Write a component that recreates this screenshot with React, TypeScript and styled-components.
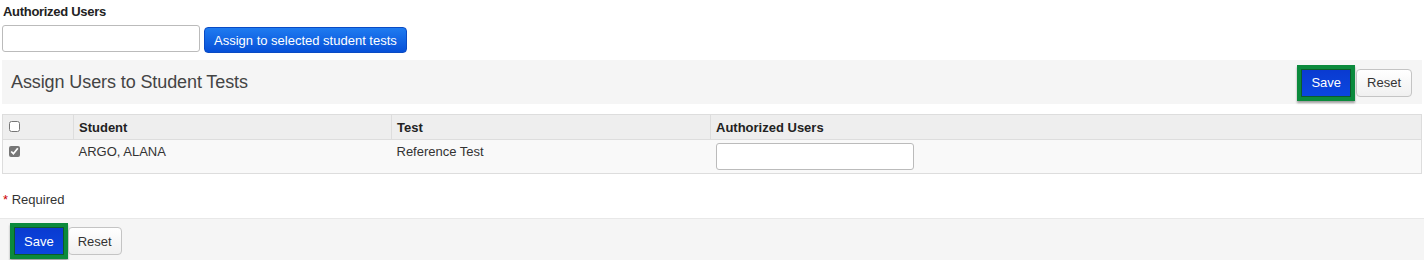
import styled, { createGlobalStyle } from "styled-components";

const Global = createGlobalStyle`
  body {
    margin: 0;
    background: #fff;
    font-family: "Liberation Sans", Arial, sans-serif;
    font-size: 13px;
    color: #333;
  }
`;

const Page = styled.div`
  padding: 0 2px;
`;

const Label = styled.div`
  font-weight: bold;
  font-size: 13px;
  letter-spacing: -0.3px;
  padding: 4px 0 0 1px;
  height: 17px;
  color: #222;
`;

const AssignRow = styled.div`
  display: flex;
  align-items: flex-start;
  gap: 4px;
  margin-top: 4px;
`;

const TextInput = styled.input<{ $w: number }>`
  box-sizing: border-box;
  width: ${(p) => p.$w}px;
  height: 27px;
  border: 1px solid #bbb;
  border-radius: 3px;
  background: #fff;
  margin: 0;
`;

const BlueButton = styled.button`
  height: 26px;
  padding: 0 9px;
  border: 1px solid #0a4bc4;
  border-radius: 4px;
  background: linear-gradient(#1f7bf0, #0650d8);
  color: #fff;
  font-family: inherit;
  font-size: 13px;
  margin-top: 2px;
`;

const PanelHead = styled.div`
  margin-top: 7px;
  height: 44px;
  background: #f5f5f5;
  display: flex;
  align-items: center;
  justify-content: space-between;
  padding: 0 10px 0 9px;
`;

const Title = styled.div`
  font-size: 18px;
  font-weight: 300;
  color: #444;
  letter-spacing: -0.1px;
`;

const Buttons = styled.div`
  display: flex;
  align-items: center;
  gap: 1px;
  padding-top: 1px;
`;

const SaveButton = styled.button`
  box-sizing: border-box;
  height: 36px;
  padding: 0 10px;
  background: linear-gradient(#0a3ad0, #0a47e0);
  color: #fff;
  font-family: inherit;
  font-size: 13px;
  border: 4px solid #0b8a3c;
  outline: 1px solid #0c5c2a;
  outline-offset: -5px;
  border-radius: 0;
  box-shadow: 0 2px 2px rgba(0, 0, 0, 0.35);
`;

const ResetButton = styled.button`
  height: 28px;
  padding: 0 10px;
  background: linear-gradient(#fff, #f0f0f0);
  border: 1px solid #c4c4c4;
  border-radius: 4px;
  color: #333;
  font-family: inherit;
  font-size: 13px;
`;

const Table = styled.table`
  margin-top: 10px;
  width: 100%;
  border-collapse: collapse;
  border: 1px solid #ddd;
  font-size: 13px;
`;

const Th = styled.th<{ $w?: number }>`
  text-align: left;
  font-weight: bold;
  background: #eeeeee;
  border: 1px solid #ddd;
  height: 24px;
  padding: 0 5px;
  width: ${(p) => (p.$w ? `${p.$w}px` : "auto")};
  color: #222;
`;

const Td = styled.td`
  background: #f9f9f9;
  border-top: 1px solid #ddd;
  height: 29px;
  padding: 4px 5px 0;
  vertical-align: top;
`;

const Check = styled.input`
  width: 11px;
  height: 11px;
  margin: 2px 0 0 1px;
  accent-color: #777;
`;

const Required = styled.div`
  margin-top: 18px;
  height: 26px;
  font-size: 13px;
  padding-left: 1px;
  > span {
    color: #c00;
  }
`;

const Footer = styled.div`
  background: #f5f5f5;
  height: 42px;
  display: flex;
  align-items: flex-start;
  padding: 4px 10px 0;
  margin: 0 -2px;
  border-top: 1px solid #e8e8e8;
  > button:last-child {
    margin-top: 4px;
    padding: 0 9px;
  }
`;

export default function App() {
  return (
    <Page>
      <Global />
      <Label>Authorized Users</Label>
      <AssignRow>
        <TextInput $w={198} />
        <BlueButton>Assign to selected student tests</BlueButton>
      </AssignRow>
      <PanelHead>
        <Title>Assign Users to Student Tests</Title>
        <Buttons>
          <SaveButton>Save</SaveButton>
          <ResetButton>Reset</ResetButton>
        </Buttons>
      </PanelHead>
      <Table>
        <thead>
          <tr>
            <Th $w={60}>
              <Check type="checkbox" />
            </Th>
            <Th $w={307}>Student</Th>
            <Th $w={308}>Test</Th>
            <Th>Authorized Users</Th>
          </tr>
        </thead>
        <tbody>
          <tr>
            <Td>
              <Check type="checkbox" defaultChecked />
            </Td>
            <Td>ARGO, ALANA</Td>
            <Td>Reference Test</Td>
            <Td>
              <TextInput $w={198} style={{ marginTop: -1 }} />
            </Td>
          </tr>
        </tbody>
      </Table>
      <Required>
        <span>*</span> Required
      </Required>
      <Footer>
        <SaveButton>Save</SaveButton>
        <ResetButton>Reset</ResetButton>
      </Footer>
    </Page>
  );
}
